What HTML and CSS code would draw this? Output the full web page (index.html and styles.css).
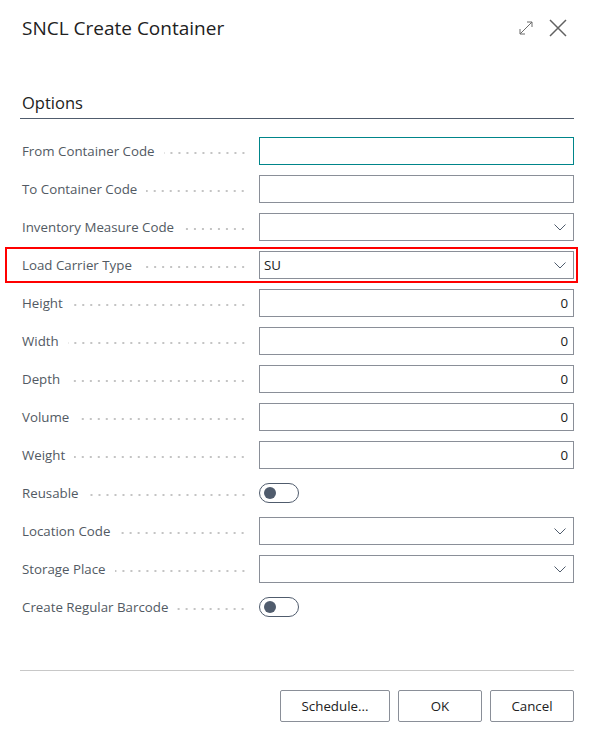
FILE: index.html
```html
<!DOCTYPE html>
<html lang="en">
<head>
<meta charset="utf-8">
<title>SNCL Create Container</title>
<link rel="stylesheet" href="styles.css">
</head>
<body>
<div class="dialog">
  <header class="head">
    <h1 class="title">SNCL Create Container</h1>
    <div class="head-icons">
      <svg class="ico-expand" width="16" height="16" viewBox="0 0 16 16" aria-hidden="true">
        <path d="M2 14 L14 2 M9 2 H14 V7 M2 9 V14 H7" fill="none" stroke="#6b6b6b" stroke-width="1"/>
      </svg>
      <svg class="ico-close" width="18" height="18" viewBox="0 0 18 18" aria-hidden="true">
        <path d="M1 1 L17 17 M17 1 L1 17" fill="none" stroke="#616161" stroke-width="1.5"/>
      </svg>
    </div>
  </header>

  <section class="group">
    <h2 class="group-title">Options</h2>
    <div class="fields">
      <div class="row"><span class="label">From Container Code<i class="leader"></i></span><div class="input focused"></div></div>
      <div class="row"><span class="label">To Container Code<i class="leader"></i></span><div class="input"></div></div>
      <div class="row"><span class="label">Inventory Measure Code<i class="leader"></i></span><div class="input select"><span class="val"></span><svg class="chev" width="12" height="7" viewBox="0 0 12 7"><path d="M0.5 0.5 L6 6 L11.5 0.5" fill="none" stroke="#505c6d" stroke-width="1"/></svg></div></div>
      <div class="row marked"><span class="label">Load Carrier Type<i class="leader"></i></span><div class="input select"><span class="val">SU</span><svg class="chev" width="12" height="7" viewBox="0 0 12 7"><path d="M0.5 0.5 L6 6 L11.5 0.5" fill="none" stroke="#505c6d" stroke-width="1"/></svg></div></div>
      <div class="row"><span class="label">Height<i class="leader"></i></span><div class="input num">0</div></div>
      <div class="row"><span class="label">Width<i class="leader"></i></span><div class="input num">0</div></div>
      <div class="row"><span class="label">Depth<i class="leader"></i></span><div class="input num">0</div></div>
      <div class="row"><span class="label">Volume<i class="leader"></i></span><div class="input num">0</div></div>
      <div class="row"><span class="label">Weight<i class="leader"></i></span><div class="input num">0</div></div>
      <div class="row"><span class="label">Reusable<i class="leader"></i></span><div class="toggle-cell"><span class="toggle"><span class="knob"></span></span></div></div>
      <div class="row"><span class="label">Location Code<i class="leader"></i></span><div class="input select"><span class="val"></span><svg class="chev" width="12" height="7" viewBox="0 0 12 7"><path d="M0.5 0.5 L6 6 L11.5 0.5" fill="none" stroke="#505c6d" stroke-width="1"/></svg></div></div>
      <div class="row"><span class="label">Storage Place<i class="leader"></i></span><div class="input select"><span class="val"></span><svg class="chev" width="12" height="7" viewBox="0 0 12 7"><path d="M0.5 0.5 L6 6 L11.5 0.5" fill="none" stroke="#505c6d" stroke-width="1"/></svg></div></div>
      <div class="row"><span class="label">Create Regular Barcode<i class="leader"></i></span><div class="toggle-cell"><span class="toggle"><span class="knob"></span></span></div></div>
    </div>
  </section>

  <footer class="actions">
    <button class="btn btn-wide">Schedule...</button>
    <button class="btn">OK</button>
    <button class="btn">Cancel</button>
  </footer>
</div>
</body>
</html>
```

FILE: styles.css
```css
* { box-sizing: border-box; }

html, body {
  margin: 0;
  padding: 0;
  background: #ffffff;
}

body {
  font-family: "Segoe UI", "Open Sans", "Noto Sans", sans-serif;
  color: #212121;
}

.dialog {
  width: 593px;
  padding: 0 19px 0 20px;
}

.head {
  display: flex;
  align-items: center;
  justify-content: space-between;
  height: 56px;
  padding-left: 2px;
}

.title {
  margin: 0;
  font-size: 19px;
  font-weight: 500;
  color: #212121;
  letter-spacing: 0;
}

.head-icons {
  display: flex;
  align-items: center;
  gap: 15px;
  padding-right: 7px;
}

.ico-expand { display: block; }
.ico-close { display: block; }

.group {
  margin-top: 36px;
}

.group-title {
  margin: 0;
  padding: 0 0 5px 2px;
  font-size: 16.5px;
  font-weight: 500;
  color: #212121;
  border-bottom: 1px solid #505c6d;
  line-height: 21px;
}

.fields {
  padding-top: 18px;
  display: flex;
  flex-direction: column;
  gap: 10px;
}

.row {
  position: relative;
  display: grid;
  grid-template-columns: 239px 1fr;
  align-items: center;
  height: 28px;
}

.row.marked::after {
  content: "";
  position: absolute;
  left: -15px;
  right: -4px;
  top: -4px;
  bottom: -4px;
  border: 2px solid #ff0000;
  pointer-events: none;
}

.label {
  display: flex;
  align-items: baseline;
  padding-left: 2px;
  padding-right: 12px;
  font-size: 13.3px;
  color: #525a63;
  white-space: nowrap;
}

.leader {
  flex: 1;
  height: 2px;
  margin-left: 9px;
  background-image: radial-gradient(circle, #c4c4c4 0.9px, transparent 1.1px);
  background-size: 8px 2px;
  background-repeat: repeat-x;
  background-position: right center;
  align-self: center;
  margin-top: 3px;
}

.input {
  height: 28px;
  border: 1px solid #8a8f98;
  background: #ffffff;
  font-size: 13.3px;
  color: #212121;
  display: flex;
  align-items: center;
  padding: 0 4px;
}

.input.focused {
  border-color: #00858a;
}

.input.select {
  justify-content: space-between;
  padding-right: 7px;
}

.input.num {
  justify-content: flex-end;
  padding-right: 5px;
}

.chev { display: block; }

.toggle-cell {
  display: flex;
  align-items: center;
}

.toggle {
  position: relative;
  display: inline-block;
  width: 40px;
  height: 20px;
  border: 1px solid #505c6d;
  border-radius: 10px;
  background: #ffffff;
}

.knob {
  position: absolute;
  left: 4px;
  top: 3px;
  width: 12px;
  height: 12px;
  border-radius: 50%;
  background: #505c6d;
}

.actions {
  margin-top: 49px;
  border-top: 1px solid #c8c8c8;
  padding-top: 19px;
  display: flex;
  justify-content: flex-end;
  gap: 8px;
}

.btn {
  height: 32px;
  width: 84px;
  border: 1px solid #8a8f98;
  border-radius: 2px;
  background: #ffffff;
  font-family: "Segoe UI", "Open Sans", "Noto Sans", sans-serif;
  font-size: 13.3px;
  color: #212121;
  padding: 0;
}

.btn-wide {
  width: 110px;
}
```
